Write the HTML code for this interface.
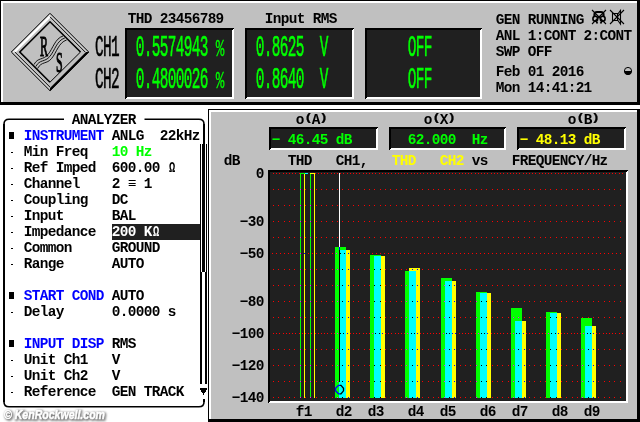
<!DOCTYPE html>
<html><head><meta charset="utf-8"><title>Analyzer</title>
<style>
html,body{margin:0;padding:0;background:#fff;}
svg{display:block;will-change:transform;}
.m{font-family:"Liberation Mono",monospace;}
.s{font-family:"Liberation Serif",serif;}
rect,path{shape-rendering:crispEdges;}
.aa path,.aa rect,.aa circle{shape-rendering:auto;}
</style></head><body>
<svg width="640" height="422" viewBox="0 0 640 422">
<rect x="0" y="0" width="640" height="422" fill="#fff"/>
<rect x="0" y="0" width="640" height="105" fill="#000"/>
<rect x="1" y="1" width="636" height="101" fill="#fff"/>
<rect x="3" y="3" width="634" height="99" fill="#c0c0c0"/>
<rect x="125" y="28" width="109" height="71" fill="#000"/>
<path d="M234 28V99H125l2 -2H232V30z" fill="#fff"/>
<rect x="127" y="30" width="105" height="67" fill="#202020"/>
<rect x="245" y="28" width="109" height="71" fill="#000"/>
<path d="M354 28V99H245l2 -2H352V30z" fill="#fff"/>
<rect x="247" y="30" width="105" height="67" fill="#202020"/>
<rect x="365" y="28" width="117" height="71" fill="#000"/>
<path d="M482 28V99H365l2 -2H480V30z" fill="#fff"/>
<rect x="367" y="30" width="113" height="67" fill="#202020"/>
<text class="m" transform="translate(95.08,56) scale(1,2.05)" font-size="14.4" font-weight="normal" fill="#000" xml:space="preserve" letter-spacing="-0.641" stroke="#000" stroke-width="0.5" style="vector-effect:non-scaling-stroke">CH1</text>
<text class="m" transform="translate(95.08,87.5) scale(1,2.05)" font-size="14.4" font-weight="normal" fill="#000" xml:space="preserve" letter-spacing="-0.641" stroke="#000" stroke-width="0.5" style="vector-effect:non-scaling-stroke">CH2</text>
<text class="m" transform="translate(127.68,23) scale(1,1)" font-size="14.4" font-weight="bold" fill="#000" xml:space="preserve" letter-spacing="-0.641">THD 23456789</text>
<text class="m" transform="translate(264.68,23) scale(1,1)" font-size="14.4" font-weight="bold" fill="#000" xml:space="preserve" letter-spacing="-0.641">Input RMS</text>
<text class="m" transform="translate(135.68,56) scale(1,2.05)" font-size="14.4" font-weight="normal" fill="#00ff00" xml:space="preserve" letter-spacing="-0.641" stroke="#00ff00" stroke-width="0.5" style="vector-effect:non-scaling-stroke">0.5574943</text>
<text class="m" transform="translate(215.68,56) scale(1,1.72)" font-size="14.4" font-weight="normal" fill="#00ff00" xml:space="preserve" letter-spacing="-0.641" stroke="#00ff00" stroke-width="0.15">%</text>
<text class="m" transform="translate(135.68,87.5) scale(1,2.05)" font-size="14.4" font-weight="normal" fill="#00ff00" xml:space="preserve" letter-spacing="-0.641" stroke="#00ff00" stroke-width="0.5" style="vector-effect:non-scaling-stroke">0.4800026</text>
<text class="m" transform="translate(215.68,87.5) scale(1,1.72)" font-size="14.4" font-weight="normal" fill="#00ff00" xml:space="preserve" letter-spacing="-0.641" stroke="#00ff00" stroke-width="0.15">%</text>
<text class="m" transform="translate(255.68,56) scale(1,2.05)" font-size="14.4" font-weight="normal" fill="#00ff00" xml:space="preserve" letter-spacing="-0.641" stroke="#00ff00" stroke-width="0.5" style="vector-effect:non-scaling-stroke">0.8625  V</text>
<text class="m" transform="translate(255.68,87.5) scale(1,2.05)" font-size="14.4" font-weight="normal" fill="#00ff00" xml:space="preserve" letter-spacing="-0.641" stroke="#00ff00" stroke-width="0.5" style="vector-effect:non-scaling-stroke">0.8640  V</text>
<text class="m" transform="translate(407.68,56) scale(1,2.05)" font-size="14.4" font-weight="normal" fill="#00ff00" xml:space="preserve" letter-spacing="-0.641" stroke="#00ff00" stroke-width="0.5" style="vector-effect:non-scaling-stroke">OFF</text>
<text class="m" transform="translate(407.68,87.5) scale(1,2.05)" font-size="14.4" font-weight="normal" fill="#00ff00" xml:space="preserve" letter-spacing="-0.641" stroke="#00ff00" stroke-width="0.5" style="vector-effect:non-scaling-stroke">OFF</text>
<text class="m" transform="translate(495.68,23.5) scale(1,1)" font-size="14.4" font-weight="bold" fill="#000" xml:space="preserve" letter-spacing="-0.641">GEN RUNNING</text>
<text class="m" transform="translate(495.68,39.5) scale(1,1)" font-size="14.4" font-weight="bold" fill="#000" xml:space="preserve" letter-spacing="-0.641">ANL 1:CONT 2:CONT</text>
<text class="m" transform="translate(495.68,55.5) scale(1,1)" font-size="14.4" font-weight="bold" fill="#000" xml:space="preserve" letter-spacing="-0.641">SWP OFF</text>
<text class="m" transform="translate(495.68,75.5) scale(1,1)" font-size="14.4" font-weight="bold" fill="#000" xml:space="preserve" letter-spacing="-0.641">Feb 01 2016</text>
<text class="m" transform="translate(495.68,91.5) scale(1,1)" font-size="14.4" font-weight="bold" fill="#000" xml:space="preserve" letter-spacing="-0.641">Mon 14:41:21</text>
<g class="aa" stroke="#000" fill="none"><path d="M594.500 16.500v-2q0-2.500 2.500-2.500h4q2.500 0 2.500 2.500v2" stroke-width="2.200"/><circle cx="595.300" cy="18.700" r="2.400" stroke-width="1.600"/><circle cx="602.700" cy="18.700" r="2.400" stroke-width="1.600"/><path d="M596 21l1.500 2.500M602 21l-1.500 2.500" stroke-width="1.600"/><rect x="598.300" y="16" width="1.600" height="1.600" fill="#000" stroke="none"/><path d="M592 10l14 14M606 10l-14 14" stroke-width="1.100"/><path d="M612.500 13.500h5v7h-5zM617.500 14.500l3-4v13.500l-3-4" stroke-width="1.100"/><path d="M610 10l14 14M624 10l-14 14" stroke-width="1.100"/></g>
<g class="aa"><circle cx="628" cy="71" r="3.600" fill="none" stroke="#000" stroke-width="1"/><path d="M624 71h8l-1 2.500l-2 1.500h-2l-2-1.500z" fill="#000"/></g>
<g class="aa" fill="none" stroke="#000"><path d="M50 14.500L12.500 52L16 52L50 18z" fill="#fff" stroke="none"/><path d="M50 14.500L87.500 52L85 52L50 17z" fill="#d4d4d4" stroke="none"/><path d="M12.500 52L50 89.500L50 87L15 52z" fill="#d4d4d4" stroke="none"/><path d="M50 91.200L89.200 52L86 52L50 88z" fill="#000" stroke="none"/><path d="M50 13.300L88.700 52L50 90.700L11.300 52z" stroke-width="1"/><path d="M50 16.800L85.200 52M14.800 52L50 87.200" stroke-width="1"/><path d="M80.500 52L50 21.800L19.800 52L50 82.200" stroke-width="1.600" stroke-linejoin="miter"/><path d="M50 82.200L80.500 52" stroke-width="1"/><path d="M34 64.500C38 57 43 60.500 48 54.500S55 38.500 63 36M35.800 66.500C39.800 59 44.800 62.500 49.800 56.500S56.800 40.500 64.800 38M37.600 68.500C41.600 61 46.600 64.500 51.600 58.500S58.600 42.500 66.600 40" stroke-width="0.900"/></g>
<text class="s" transform="translate(40.00,56) scale(1,2.5)" font-size="12" font-weight="normal" fill="#000" xml:space="preserve" stroke="#000" stroke-width="0.9" style="vector-effect:non-scaling-stroke">R</text>
<text class="s" transform="translate(56.00,72) scale(1,2.5)" font-size="12" font-weight="normal" fill="#000" xml:space="preserve" stroke="#000" stroke-width="0.9" style="vector-effect:non-scaling-stroke">S</text>
<rect x="3" y="124" width="2" height="278" fill="#000"/>
<rect x="203" y="124" width="2" height="20" fill="#000"/>
<rect x="203" y="399" width="2" height="3" fill="#000"/>
<g class="aa" fill="none" stroke="#000" stroke-width="1.600"><path d="M64 119.300H9q-5 0 -5 5M4 402q0 4.700 5 4.700H199q5 0 5 -4.700M144.500 119.300H199q5 0 5 5"/></g>
<text class="m" transform="translate(71.68,123.5) scale(1,1)" font-size="14.4" font-weight="bold" fill="#000" xml:space="preserve" letter-spacing="-0.641">ANALYZER</text>
<rect x="200" y="144" width="1" height="128" fill="#000"/>
<rect x="202" y="144" width="3" height="128" fill="#000"/>
<rect x="206" y="144" width="1" height="128" fill="#000"/>
<rect x="200" y="272" width="2" height="112" fill="#000"/>
<rect x="205" y="272" width="2" height="112" fill="#000"/>
<path d="M200 388h7v1.500l-3.500 5.500l-3.500 -5.500z" fill="#000"/>
<rect x="9" y="132.0" width="5" height="7" fill="#000"/>
<text class="m" transform="translate(23.68,139.5) scale(1,1)" font-size="14.4" font-weight="bold" fill="#0000ff" xml:space="preserve" letter-spacing="-0.641">INSTRUMENT</text>
<text class="m" transform="translate(111.68,139.5) scale(1,1)" font-size="14.4" font-weight="bold" fill="#000" xml:space="preserve" letter-spacing="-0.641">ANLG  22kHz</text>
<rect x="11" y="152.0" width="2" height="1" fill="#000"/>
<text class="m" transform="translate(23.68,155.5) scale(1,1)" font-size="14.4" font-weight="bold" fill="#000" xml:space="preserve" letter-spacing="-0.641">Min Freq</text>
<text class="m" transform="translate(111.68,155.5) scale(1,1)" font-size="14.4" font-weight="bold" fill="#00ff00" xml:space="preserve" letter-spacing="-0.641">10 Hz</text>
<rect x="11" y="168.0" width="2" height="1" fill="#000"/>
<text class="m" transform="translate(23.68,171.5) scale(1,1)" font-size="14.4" font-weight="bold" fill="#000" xml:space="preserve" letter-spacing="-0.641">Ref Imped</text>
<text class="m" transform="translate(111.68,171.5) scale(1,1)" font-size="14.4" font-weight="bold" fill="#000" xml:space="preserve" letter-spacing="-0.641">600.00  </text>
<text class="m" transform="translate(168.88,171.5) scale(0.72,1)" font-size="14.4" font-weight="bold" fill="#000" xml:space="preserve" letter-spacing="-0.641">Ω</text>
<rect x="11" y="184.0" width="2" height="1" fill="#000"/>
<text class="m" transform="translate(23.68,187.5) scale(1,1)" font-size="14.4" font-weight="bold" fill="#000" xml:space="preserve" letter-spacing="-0.641">Channel</text>
<text class="m" transform="translate(111.68,187.5) scale(1,1)" font-size="14.4" font-weight="bold" fill="#000" xml:space="preserve" letter-spacing="-0.641">2 ≡ 1</text>
<rect x="11" y="200.0" width="2" height="1" fill="#000"/>
<text class="m" transform="translate(23.68,203.5) scale(1,1)" font-size="14.4" font-weight="bold" fill="#000" xml:space="preserve" letter-spacing="-0.641">Coupling</text>
<text class="m" transform="translate(111.68,203.5) scale(1,1)" font-size="14.4" font-weight="bold" fill="#000" xml:space="preserve" letter-spacing="-0.641">DC</text>
<rect x="11" y="216.0" width="2" height="1" fill="#000"/>
<text class="m" transform="translate(23.68,219.5) scale(1,1)" font-size="14.4" font-weight="bold" fill="#000" xml:space="preserve" letter-spacing="-0.641">Input</text>
<text class="m" transform="translate(111.68,219.5) scale(1,1)" font-size="14.4" font-weight="bold" fill="#000" xml:space="preserve" letter-spacing="-0.641">BAL</text>
<rect x="11" y="232.0" width="2" height="1" fill="#000"/>
<text class="m" transform="translate(23.68,235.5) scale(1,1)" font-size="14.4" font-weight="bold" fill="#000" xml:space="preserve" letter-spacing="-0.641">Impedance</text>
<rect x="112" y="224.0" width="88" height="16" fill="#202020"/>
<text class="m" transform="translate(111.68,235.5) scale(1,1)" font-size="14.4" font-weight="bold" fill="#fff" xml:space="preserve" letter-spacing="-0.641">200 K </text>
<text class="m" transform="translate(152.88,235.5) scale(0.72,1)" font-size="14.4" font-weight="bold" fill="#fff" xml:space="preserve" letter-spacing="-0.641">Ω</text>
<rect x="11" y="248.0" width="2" height="1" fill="#000"/>
<text class="m" transform="translate(23.68,251.5) scale(1,1)" font-size="14.4" font-weight="bold" fill="#000" xml:space="preserve" letter-spacing="-0.641">Common</text>
<text class="m" transform="translate(111.68,251.5) scale(1,1)" font-size="14.4" font-weight="bold" fill="#000" xml:space="preserve" letter-spacing="-0.641">GROUND</text>
<rect x="11" y="264.0" width="2" height="1" fill="#000"/>
<text class="m" transform="translate(23.68,267.5) scale(1,1)" font-size="14.4" font-weight="bold" fill="#000" xml:space="preserve" letter-spacing="-0.641">Range</text>
<text class="m" transform="translate(111.68,267.5) scale(1,1)" font-size="14.4" font-weight="bold" fill="#000" xml:space="preserve" letter-spacing="-0.641">AUTO</text>
<rect x="9" y="292.0" width="5" height="7" fill="#000"/>
<text class="m" transform="translate(23.68,299.5) scale(1,1)" font-size="14.4" font-weight="bold" fill="#0000ff" xml:space="preserve" letter-spacing="-0.641">START COND</text>
<text class="m" transform="translate(111.68,299.5) scale(1,1)" font-size="14.4" font-weight="bold" fill="#000" xml:space="preserve" letter-spacing="-0.641">AUTO</text>
<rect x="11" y="312.0" width="2" height="1" fill="#000"/>
<text class="m" transform="translate(23.68,315.5) scale(1,1)" font-size="14.4" font-weight="bold" fill="#000" xml:space="preserve" letter-spacing="-0.641">Delay</text>
<text class="m" transform="translate(111.68,315.5) scale(1,1)" font-size="14.4" font-weight="bold" fill="#000" xml:space="preserve" letter-spacing="-0.641">0.0000 s</text>
<rect x="9" y="340.0" width="5" height="7" fill="#000"/>
<text class="m" transform="translate(23.68,347.5) scale(1,1)" font-size="14.4" font-weight="bold" fill="#0000ff" xml:space="preserve" letter-spacing="-0.641">INPUT DISP</text>
<text class="m" transform="translate(111.68,347.5) scale(1,1)" font-size="14.4" font-weight="bold" fill="#000" xml:space="preserve" letter-spacing="-0.641">RMS</text>
<rect x="11" y="360.0" width="2" height="1" fill="#000"/>
<text class="m" transform="translate(23.68,363.5) scale(1,1)" font-size="14.4" font-weight="bold" fill="#000" xml:space="preserve" letter-spacing="-0.641">Unit Ch1</text>
<text class="m" transform="translate(111.68,363.5) scale(1,1)" font-size="14.4" font-weight="bold" fill="#000" xml:space="preserve" letter-spacing="-0.641">V</text>
<rect x="11" y="376.0" width="2" height="1" fill="#000"/>
<text class="m" transform="translate(23.68,379.5) scale(1,1)" font-size="14.4" font-weight="bold" fill="#000" xml:space="preserve" letter-spacing="-0.641">Unit Ch2</text>
<text class="m" transform="translate(111.68,379.5) scale(1,1)" font-size="14.4" font-weight="bold" fill="#000" xml:space="preserve" letter-spacing="-0.641">V</text>
<rect x="11" y="392.0" width="2" height="1" fill="#000"/>
<text class="m" transform="translate(23.68,395.5) scale(1,1)" font-size="14.4" font-weight="bold" fill="#000" xml:space="preserve" letter-spacing="-0.641">Reference</text>
<text class="m" transform="translate(111.68,395.5) scale(1,1)" font-size="14.4" font-weight="bold" fill="#000" xml:space="preserve" letter-spacing="-0.641">GEN TRACK</text>
<defs><filter id="bl" x="-10%" y="-50%" width="120%" height="200%"><feGaussianBlur stdDeviation="1.1"/></filter></defs>
<text x="5" y="420" font-family="Liberation Sans, sans-serif" font-style="italic" font-weight="bold" font-size="13" textLength="101" lengthAdjust="spacingAndGlyphs" fill="#808080" stroke="#808080" stroke-width="2" filter="url(#bl)">© KenRockwell.com</text>
<text x="4" y="419" font-family="Liberation Sans, sans-serif" font-style="italic" font-weight="bold" font-size="13" textLength="101" lengthAdjust="spacingAndGlyphs" fill="#fff" stroke="#fff" stroke-width="0.500">© KenRockwell.com</text>
<rect x="208" y="109" width="432" height="313" fill="#000"/>
<rect x="209" y="110" width="428" height="309" fill="#fff"/>
<rect x="211" y="112" width="426" height="307" fill="#c0c0c0"/>
<rect x="269" y="127" width="109" height="23" fill="#000"/>
<path d="M378 127V150H269l2 -2H376V129z" fill="#fff"/>
<rect x="271" y="129" width="105" height="19" fill="#202020"/>
<rect x="389" y="127" width="117" height="23" fill="#000"/>
<path d="M506 127V150H389l2 -2H504V129z" fill="#fff"/>
<rect x="391" y="129" width="113" height="19" fill="#202020"/>
<rect x="517" y="127" width="109" height="23" fill="#000"/>
<path d="M626 127V150H517l2 -2H624V129z" fill="#fff"/>
<rect x="519" y="129" width="105" height="19" fill="#202020"/>
<text class="m" transform="translate(295.68,123.5) scale(1,1)" font-size="14.4" font-weight="bold" fill="#000" xml:space="preserve" letter-spacing="-0.641">o A</text>
<text class="m" transform="translate(304.18,121.3) scale(1,0.76)" font-size="14.4" font-weight="bold" fill="#000" xml:space="preserve" letter-spacing="-0.641" stroke="#000" stroke-width="0.3">(</text>
<text class="m" transform="translate(319.18,121.3) scale(1,0.76)" font-size="14.4" font-weight="bold" fill="#000" xml:space="preserve" letter-spacing="-0.641" stroke="#000" stroke-width="0.3">)</text>
<text class="m" transform="translate(423.68,123.5) scale(1,1)" font-size="14.4" font-weight="bold" fill="#000" xml:space="preserve" letter-spacing="-0.641">o X</text>
<text class="m" transform="translate(432.18,121.3) scale(1,0.76)" font-size="14.4" font-weight="bold" fill="#000" xml:space="preserve" letter-spacing="-0.641" stroke="#000" stroke-width="0.3">(</text>
<text class="m" transform="translate(447.18,121.3) scale(1,0.76)" font-size="14.4" font-weight="bold" fill="#000" xml:space="preserve" letter-spacing="-0.641" stroke="#000" stroke-width="0.3">)</text>
<text class="m" transform="translate(567.68,123.5) scale(1,1)" font-size="14.4" font-weight="bold" fill="#000" xml:space="preserve" letter-spacing="-0.641">o B</text>
<text class="m" transform="translate(576.18,121.3) scale(1,0.76)" font-size="14.4" font-weight="bold" fill="#000" xml:space="preserve" letter-spacing="-0.641" stroke="#000" stroke-width="0.3">(</text>
<text class="m" transform="translate(591.18,121.3) scale(1,0.76)" font-size="14.4" font-weight="bold" fill="#000" xml:space="preserve" letter-spacing="-0.641" stroke="#000" stroke-width="0.3">)</text>
<text class="m" transform="translate(271.68,143.5) scale(1,1)" font-size="14.4" font-weight="bold" fill="#00ff00" xml:space="preserve" letter-spacing="-0.641">− 46.45 dB</text>
<text class="m" transform="translate(407.68,143.5) scale(1,1)" font-size="14.4" font-weight="bold" fill="#00ff00" xml:space="preserve" letter-spacing="-0.641">62.000  Hz</text>
<text class="m" transform="translate(519.68,143.5) scale(1,1)" font-size="14.4" font-weight="bold" fill="#ffff00" xml:space="preserve" letter-spacing="-0.641">− 48.13 dB</text>
<text class="m" transform="translate(223.68,164.5) scale(1,1)" font-size="14.4" font-weight="bold" fill="#000" xml:space="preserve" letter-spacing="-0.641">dB</text>
<text class="m" transform="translate(287.68,164.5) scale(1,1)" font-size="14.4" font-weight="bold" fill="#000" xml:space="preserve" letter-spacing="-0.641">THD</text>
<text class="m" transform="translate(335.68,164.5) scale(1,1)" font-size="14.4" font-weight="bold" fill="#000" xml:space="preserve" letter-spacing="-0.641">CH1,</text>
<text class="m" transform="translate(391.68,164.5) scale(1,1)" font-size="14.4" font-weight="bold" fill="#ffff00" xml:space="preserve" letter-spacing="-0.641">THD</text>
<text class="m" transform="translate(439.68,164.5) scale(1,1)" font-size="14.4" font-weight="bold" fill="#ffff00" xml:space="preserve" letter-spacing="-0.641">CH2</text>
<text class="m" transform="translate(471.68,164.5) scale(1,1)" font-size="14.4" font-weight="bold" fill="#000" xml:space="preserve" letter-spacing="-0.641">vs</text>
<text class="m" transform="translate(511.68,164.5) scale(1,1)" font-size="14.4" font-weight="bold" fill="#000" xml:space="preserve" letter-spacing="-0.641">FREQUENCY/Hz</text>
<rect x="268" y="170" width="360" height="233" fill="#000"/>
<path d="M628 170V403H268l2 -2H626V172z" fill="#fff"/>
<rect x="270" y="172" width="356" height="229" fill="#202020"/>
<text class="m" transform="translate(255.68,177.5) scale(1,1)" font-size="14.4" font-weight="bold" fill="#000" xml:space="preserve" letter-spacing="-0.641">0</text>
<text class="m" transform="translate(239.68,225.5) scale(1,1)" font-size="14.4" font-weight="bold" fill="#000" xml:space="preserve" letter-spacing="-0.641">−30</text>
<text class="m" transform="translate(239.68,257.5) scale(1,1)" font-size="14.4" font-weight="bold" fill="#000" xml:space="preserve" letter-spacing="-0.641">−50</text>
<text class="m" transform="translate(239.68,305.5) scale(1,1)" font-size="14.4" font-weight="bold" fill="#000" xml:space="preserve" letter-spacing="-0.641">−80</text>
<text class="m" transform="translate(231.68,337.5) scale(1,1)" font-size="14.4" font-weight="bold" fill="#000" xml:space="preserve" letter-spacing="-0.641">−100</text>
<text class="m" transform="translate(231.68,369.5) scale(1,1)" font-size="14.4" font-weight="bold" fill="#000" xml:space="preserve" letter-spacing="-0.641">−120</text>
<text class="m" transform="translate(231.68,401.5) scale(1,1)" font-size="14.4" font-weight="bold" fill="#000" xml:space="preserve" letter-spacing="-0.641">−140</text>
<rect x="300" y="173" width="1" height="225" fill="#00ff00"/>
<rect x="310" y="173" width="1" height="225" fill="#00ff00"/>
<rect x="304" y="173" width="1" height="225" fill="#ffff00"/>
<rect x="314" y="173" width="1" height="225" fill="#ffff00"/>
<rect x="300" y="173" width="5" height="1" fill="#00ff00"/>
<rect x="305" y="173" width="3" height="1" fill="#00ffff"/>
<rect x="310" y="173" width="4" height="1" fill="#ffff00"/>
<rect x="335" y="247" width="11" height="151" fill="#00ff00"/>
<rect x="339" y="250" width="11" height="148" fill="#ffff00"/>
<rect x="339" y="250" width="7" height="148" fill="#00ffff"/>
<rect x="370" y="255" width="11" height="143" fill="#00ff00"/>
<rect x="374" y="256" width="11" height="142" fill="#ffff00"/>
<rect x="374" y="256" width="7" height="142" fill="#00ffff"/>
<rect x="405" y="271" width="11" height="127" fill="#00ff00"/>
<rect x="409" y="268" width="11" height="130" fill="#ffff00"/>
<rect x="409" y="271" width="7" height="127" fill="#00ffff"/>
<rect x="441" y="278" width="11" height="120" fill="#00ff00"/>
<rect x="445" y="281" width="11" height="117" fill="#ffff00"/>
<rect x="445" y="281" width="7" height="117" fill="#00ffff"/>
<rect x="476" y="292" width="11" height="106" fill="#00ff00"/>
<rect x="480" y="293" width="11" height="105" fill="#ffff00"/>
<rect x="480" y="293" width="7" height="105" fill="#00ffff"/>
<rect x="511" y="308" width="11" height="90" fill="#00ff00"/>
<rect x="515" y="321" width="11" height="77" fill="#ffff00"/>
<rect x="515" y="321" width="7" height="77" fill="#00ffff"/>
<rect x="546" y="312" width="11" height="86" fill="#00ff00"/>
<rect x="550" y="313" width="11" height="85" fill="#ffff00"/>
<rect x="550" y="313" width="7" height="85" fill="#00ffff"/>
<rect x="581" y="318" width="11" height="80" fill="#00ff00"/>
<rect x="585" y="326" width="11" height="72" fill="#ffff00"/>
<rect x="585" y="326" width="7" height="72" fill="#00ffff"/>
<path d="M273 173.5h1M276 173.5h1M279 173.5h1M283 173.5h1M286 173.5h1M289 173.5h1M292 173.5h1M295 173.5h1M299 173.5h1M315 173.5h1M318 173.5h1M321 173.5h1M324 173.5h1M327 173.5h1M331 173.5h1M334 173.5h1M337 173.5h1M340 173.5h1M343 173.5h1M347 173.5h1M350 173.5h1M353 173.5h1M356 173.5h1M359 173.5h1M363 173.5h1M366 173.5h1M369 173.5h1M372 173.5h1M375 173.5h1M379 173.5h1M382 173.5h1M385 173.5h1M388 173.5h1M391 173.5h1M395 173.5h1M398 173.5h1M401 173.5h1M404 173.5h1M407 173.5h1M411 173.5h1M414 173.5h1M417 173.5h1M420 173.5h1M423 173.5h1M427 173.5h1M430 173.5h1M433 173.5h1M436 173.5h1M439 173.5h1M443 173.5h1M446 173.5h1M449 173.5h1M452 173.5h1M455 173.5h1M459 173.5h1M462 173.5h1M465 173.5h1M468 173.5h1M471 173.5h1M475 173.5h1M478 173.5h1M481 173.5h1M484 173.5h1M487 173.5h1M491 173.5h1M494 173.5h1M497 173.5h1M500 173.5h1M503 173.5h1M507 173.5h1M510 173.5h1M513 173.5h1M516 173.5h1M519 173.5h1M523 173.5h1M526 173.5h1M529 173.5h1M532 173.5h1M535 173.5h1M539 173.5h1M542 173.5h1M545 173.5h1M548 173.5h1M551 173.5h1M555 173.5h1M558 173.5h1M561 173.5h1M564 173.5h1M567 173.5h1M571 173.5h1M574 173.5h1M577 173.5h1M580 173.5h1M583 173.5h1M587 173.5h1M590 173.5h1M593 173.5h1M596 173.5h1M599 173.5h1M603 173.5h1M606 173.5h1M609 173.5h1M612 173.5h1M615 173.5h1M619 173.5h1M622 173.5h1M273 189.5h1M278 189.5h1M284 189.5h1M289 189.5h1M294 189.5h1M305 189.5h1M316 189.5h1M321 189.5h1M326 189.5h1M332 189.5h1M337 189.5h1M342 189.5h1M348 189.5h1M353 189.5h1M358 189.5h1M364 189.5h1M369 189.5h1M374 189.5h1M380 189.5h1M385 189.5h1M390 189.5h1M396 189.5h1M401 189.5h1M406 189.5h1M412 189.5h1M417 189.5h1M422 189.5h1M428 189.5h1M433 189.5h1M438 189.5h1M444 189.5h1M449 189.5h1M454 189.5h1M460 189.5h1M465 189.5h1M470 189.5h1M476 189.5h1M481 189.5h1M486 189.5h1M492 189.5h1M497 189.5h1M502 189.5h1M508 189.5h1M513 189.5h1M518 189.5h1M524 189.5h1M529 189.5h1M534 189.5h1M540 189.5h1M545 189.5h1M550 189.5h1M556 189.5h1M561 189.5h1M566 189.5h1M572 189.5h1M577 189.5h1M582 189.5h1M588 189.5h1M593 189.5h1M598 189.5h1M604 189.5h1M609 189.5h1M614 189.5h1M620 189.5h1M273 205.5h1M278 205.5h1M284 205.5h1M289 205.5h1M294 205.5h1M305 205.5h1M316 205.5h1M321 205.5h1M326 205.5h1M332 205.5h1M337 205.5h1M342 205.5h1M348 205.5h1M353 205.5h1M358 205.5h1M364 205.5h1M369 205.5h1M374 205.5h1M380 205.5h1M385 205.5h1M390 205.5h1M396 205.5h1M401 205.5h1M406 205.5h1M412 205.5h1M417 205.5h1M422 205.5h1M428 205.5h1M433 205.5h1M438 205.5h1M444 205.5h1M449 205.5h1M454 205.5h1M460 205.5h1M465 205.5h1M470 205.5h1M476 205.5h1M481 205.5h1M486 205.5h1M492 205.5h1M497 205.5h1M502 205.5h1M508 205.5h1M513 205.5h1M518 205.5h1M524 205.5h1M529 205.5h1M534 205.5h1M540 205.5h1M545 205.5h1M550 205.5h1M556 205.5h1M561 205.5h1M566 205.5h1M572 205.5h1M577 205.5h1M582 205.5h1M588 205.5h1M593 205.5h1M598 205.5h1M604 205.5h1M609 205.5h1M614 205.5h1M620 205.5h1M273 221.5h1M278 221.5h1M284 221.5h1M289 221.5h1M294 221.5h1M305 221.5h1M316 221.5h1M321 221.5h1M326 221.5h1M332 221.5h1M337 221.5h1M342 221.5h1M348 221.5h1M353 221.5h1M358 221.5h1M364 221.5h1M369 221.5h1M374 221.5h1M380 221.5h1M385 221.5h1M390 221.5h1M396 221.5h1M401 221.5h1M406 221.5h1M412 221.5h1M417 221.5h1M422 221.5h1M428 221.5h1M433 221.5h1M438 221.5h1M444 221.5h1M449 221.5h1M454 221.5h1M460 221.5h1M465 221.5h1M470 221.5h1M476 221.5h1M481 221.5h1M486 221.5h1M492 221.5h1M497 221.5h1M502 221.5h1M508 221.5h1M513 221.5h1M518 221.5h1M524 221.5h1M529 221.5h1M534 221.5h1M540 221.5h1M545 221.5h1M550 221.5h1M556 221.5h1M561 221.5h1M566 221.5h1M572 221.5h1M577 221.5h1M582 221.5h1M588 221.5h1M593 221.5h1M598 221.5h1M604 221.5h1M609 221.5h1M614 221.5h1M620 221.5h1M273 237.5h1M278 237.5h1M284 237.5h1M289 237.5h1M294 237.5h1M305 237.5h1M316 237.5h1M321 237.5h1M326 237.5h1M332 237.5h1M337 237.5h1M342 237.5h1M348 237.5h1M353 237.5h1M358 237.5h1M364 237.5h1M369 237.5h1M374 237.5h1M380 237.5h1M385 237.5h1M390 237.5h1M396 237.5h1M401 237.5h1M406 237.5h1M412 237.5h1M417 237.5h1M422 237.5h1M428 237.5h1M433 237.5h1M438 237.5h1M444 237.5h1M449 237.5h1M454 237.5h1M460 237.5h1M465 237.5h1M470 237.5h1M476 237.5h1M481 237.5h1M486 237.5h1M492 237.5h1M497 237.5h1M502 237.5h1M508 237.5h1M513 237.5h1M518 237.5h1M524 237.5h1M529 237.5h1M534 237.5h1M540 237.5h1M545 237.5h1M550 237.5h1M556 237.5h1M561 237.5h1M566 237.5h1M572 237.5h1M577 237.5h1M582 237.5h1M588 237.5h1M593 237.5h1M598 237.5h1M604 237.5h1M609 237.5h1M614 237.5h1M620 237.5h1M272 253.5h1M276 253.5h1M280 253.5h1M284 253.5h1M288 253.5h1M292 253.5h1M296 253.5h1M308 253.5h1M312 253.5h1M316 253.5h1M320 253.5h1M324 253.5h1M328 253.5h1M332 253.5h1M352 253.5h1M356 253.5h1M360 253.5h1M364 253.5h1M368 253.5h1M372 253.5h1M376 253.5h1M380 253.5h1M384 253.5h1M388 253.5h1M392 253.5h1M396 253.5h1M400 253.5h1M404 253.5h1M408 253.5h1M412 253.5h1M416 253.5h1M420 253.5h1M424 253.5h1M428 253.5h1M432 253.5h1M436 253.5h1M440 253.5h1M444 253.5h1M448 253.5h1M452 253.5h1M456 253.5h1M460 253.5h1M464 253.5h1M468 253.5h1M472 253.5h1M476 253.5h1M480 253.5h1M484 253.5h1M488 253.5h1M492 253.5h1M496 253.5h1M500 253.5h1M504 253.5h1M508 253.5h1M512 253.5h1M516 253.5h1M520 253.5h1M524 253.5h1M528 253.5h1M532 253.5h1M536 253.5h1M540 253.5h1M544 253.5h1M548 253.5h1M552 253.5h1M556 253.5h1M560 253.5h1M564 253.5h1M568 253.5h1M572 253.5h1M576 253.5h1M580 253.5h1M584 253.5h1M588 253.5h1M592 253.5h1M596 253.5h1M600 253.5h1M604 253.5h1M608 253.5h1M612 253.5h1M616 253.5h1M620 253.5h1M273 269.5h1M278 269.5h1M284 269.5h1M289 269.5h1M294 269.5h1M305 269.5h1M316 269.5h1M321 269.5h1M326 269.5h1M332 269.5h1M353 269.5h1M358 269.5h1M364 269.5h1M369 269.5h1M385 269.5h1M390 269.5h1M396 269.5h1M401 269.5h1M406 269.5h1M422 269.5h1M428 269.5h1M433 269.5h1M438 269.5h1M444 269.5h1M449 269.5h1M454 269.5h1M460 269.5h1M465 269.5h1M470 269.5h1M476 269.5h1M481 269.5h1M486 269.5h1M492 269.5h1M497 269.5h1M502 269.5h1M508 269.5h1M513 269.5h1M518 269.5h1M524 269.5h1M529 269.5h1M534 269.5h1M540 269.5h1M545 269.5h1M550 269.5h1M556 269.5h1M561 269.5h1M566 269.5h1M572 269.5h1M577 269.5h1M582 269.5h1M588 269.5h1M593 269.5h1M598 269.5h1M604 269.5h1M609 269.5h1M614 269.5h1M620 269.5h1M273 285.5h1M278 285.5h1M284 285.5h1M289 285.5h1M294 285.5h1M305 285.5h1M316 285.5h1M321 285.5h1M326 285.5h1M332 285.5h1M353 285.5h1M358 285.5h1M364 285.5h1M369 285.5h1M385 285.5h1M390 285.5h1M396 285.5h1M401 285.5h1M422 285.5h1M428 285.5h1M433 285.5h1M438 285.5h1M460 285.5h1M465 285.5h1M470 285.5h1M476 285.5h1M481 285.5h1M486 285.5h1M492 285.5h1M497 285.5h1M502 285.5h1M508 285.5h1M513 285.5h1M518 285.5h1M524 285.5h1M529 285.5h1M534 285.5h1M540 285.5h1M545 285.5h1M550 285.5h1M556 285.5h1M561 285.5h1M566 285.5h1M572 285.5h1M577 285.5h1M582 285.5h1M588 285.5h1M593 285.5h1M598 285.5h1M604 285.5h1M609 285.5h1M614 285.5h1M620 285.5h1M273 301.5h1M278 301.5h1M284 301.5h1M289 301.5h1M294 301.5h1M305 301.5h1M316 301.5h1M321 301.5h1M326 301.5h1M332 301.5h1M353 301.5h1M358 301.5h1M364 301.5h1M369 301.5h1M385 301.5h1M390 301.5h1M396 301.5h1M401 301.5h1M422 301.5h1M428 301.5h1M433 301.5h1M438 301.5h1M460 301.5h1M465 301.5h1M470 301.5h1M492 301.5h1M497 301.5h1M502 301.5h1M508 301.5h1M513 301.5h1M518 301.5h1M524 301.5h1M529 301.5h1M534 301.5h1M540 301.5h1M545 301.5h1M550 301.5h1M556 301.5h1M561 301.5h1M566 301.5h1M572 301.5h1M577 301.5h1M582 301.5h1M588 301.5h1M593 301.5h1M598 301.5h1M604 301.5h1M609 301.5h1M614 301.5h1M620 301.5h1M273 317.5h1M278 317.5h1M284 317.5h1M289 317.5h1M294 317.5h1M305 317.5h1M316 317.5h1M321 317.5h1M326 317.5h1M332 317.5h1M353 317.5h1M358 317.5h1M364 317.5h1M369 317.5h1M385 317.5h1M390 317.5h1M396 317.5h1M401 317.5h1M422 317.5h1M428 317.5h1M433 317.5h1M438 317.5h1M460 317.5h1M465 317.5h1M470 317.5h1M492 317.5h1M497 317.5h1M502 317.5h1M508 317.5h1M524 317.5h1M529 317.5h1M534 317.5h1M540 317.5h1M545 317.5h1M561 317.5h1M566 317.5h1M572 317.5h1M577 317.5h1M582 317.5h1M588 317.5h1M593 317.5h1M598 317.5h1M604 317.5h1M609 317.5h1M614 317.5h1M620 317.5h1M273 333.5h1M276 333.5h1M279 333.5h1M283 333.5h1M286 333.5h1M289 333.5h1M292 333.5h1M295 333.5h1M299 333.5h1M302 333.5h1M305 333.5h1M308 333.5h1M311 333.5h1M315 333.5h1M318 333.5h1M321 333.5h1M324 333.5h1M327 333.5h1M331 333.5h1M334 333.5h1M350 333.5h1M353 333.5h1M356 333.5h1M359 333.5h1M363 333.5h1M366 333.5h1M369 333.5h1M385 333.5h1M388 333.5h1M391 333.5h1M395 333.5h1M398 333.5h1M401 333.5h1M404 333.5h1M420 333.5h1M423 333.5h1M427 333.5h1M430 333.5h1M433 333.5h1M436 333.5h1M439 333.5h1M459 333.5h1M462 333.5h1M465 333.5h1M468 333.5h1M471 333.5h1M475 333.5h1M491 333.5h1M494 333.5h1M497 333.5h1M500 333.5h1M503 333.5h1M507 333.5h1M510 333.5h1M526 333.5h1M529 333.5h1M532 333.5h1M535 333.5h1M539 333.5h1M542 333.5h1M545 333.5h1M561 333.5h1M564 333.5h1M567 333.5h1M571 333.5h1M574 333.5h1M577 333.5h1M580 333.5h1M596 333.5h1M599 333.5h1M603 333.5h1M606 333.5h1M609 333.5h1M612 333.5h1M615 333.5h1M619 333.5h1M622 333.5h1M273 349.5h1M278 349.5h1M284 349.5h1M289 349.5h1M294 349.5h1M305 349.5h1M316 349.5h1M321 349.5h1M326 349.5h1M332 349.5h1M353 349.5h1M358 349.5h1M364 349.5h1M369 349.5h1M385 349.5h1M390 349.5h1M396 349.5h1M401 349.5h1M422 349.5h1M428 349.5h1M433 349.5h1M438 349.5h1M460 349.5h1M465 349.5h1M470 349.5h1M492 349.5h1M497 349.5h1M502 349.5h1M508 349.5h1M529 349.5h1M534 349.5h1M540 349.5h1M545 349.5h1M561 349.5h1M566 349.5h1M572 349.5h1M577 349.5h1M598 349.5h1M604 349.5h1M609 349.5h1M614 349.5h1M620 349.5h1M273 365.5h1M278 365.5h1M284 365.5h1M289 365.5h1M294 365.5h1M305 365.5h1M316 365.5h1M321 365.5h1M326 365.5h1M332 365.5h1M353 365.5h1M358 365.5h1M364 365.5h1M369 365.5h1M385 365.5h1M390 365.5h1M396 365.5h1M401 365.5h1M422 365.5h1M428 365.5h1M433 365.5h1M438 365.5h1M460 365.5h1M465 365.5h1M470 365.5h1M492 365.5h1M497 365.5h1M502 365.5h1M508 365.5h1M529 365.5h1M534 365.5h1M540 365.5h1M545 365.5h1M561 365.5h1M566 365.5h1M572 365.5h1M577 365.5h1M598 365.5h1M604 365.5h1M609 365.5h1M614 365.5h1M620 365.5h1M273 381.5h1M278 381.5h1M284 381.5h1M289 381.5h1M294 381.5h1M305 381.5h1M316 381.5h1M321 381.5h1M326 381.5h1M332 381.5h1M353 381.5h1M358 381.5h1M364 381.5h1M369 381.5h1M385 381.5h1M390 381.5h1M396 381.5h1M401 381.5h1M422 381.5h1M428 381.5h1M433 381.5h1M438 381.5h1M460 381.5h1M465 381.5h1M470 381.5h1M492 381.5h1M497 381.5h1M502 381.5h1M508 381.5h1M529 381.5h1M534 381.5h1M540 381.5h1M545 381.5h1M561 381.5h1M566 381.5h1M572 381.5h1M577 381.5h1M598 381.5h1M604 381.5h1M609 381.5h1M614 381.5h1M620 381.5h1M273 397.5h1M278 397.5h1M284 397.5h1M289 397.5h1M294 397.5h1M305 397.5h1M316 397.5h1M321 397.5h1M326 397.5h1M332 397.5h1M353 397.5h1M358 397.5h1M364 397.5h1M369 397.5h1M385 397.5h1M390 397.5h1M396 397.5h1M401 397.5h1M422 397.5h1M428 397.5h1M433 397.5h1M438 397.5h1M460 397.5h1M465 397.5h1M470 397.5h1M492 397.5h1M497 397.5h1M502 397.5h1M508 397.5h1M529 397.5h1M534 397.5h1M540 397.5h1M545 397.5h1M561 397.5h1M566 397.5h1M572 397.5h1M577 397.5h1M598 397.5h1M604 397.5h1M609 397.5h1M614 397.5h1M620 397.5h1" stroke="#ff0000" stroke-width="1" fill="none"/>
<path d="M300 189.5h1M310 189.5h1M300 205.5h1M310 205.5h1M300 221.5h1M310 221.5h1M300 237.5h1M310 237.5h1M300 253.5h1M336 253.5h1M300 269.5h1M310 269.5h1M337 269.5h1M300 285.5h1M310 285.5h1M337 285.5h1M406 285.5h1M444 285.5h1M300 301.5h1M310 301.5h1M337 301.5h1M406 301.5h1M444 301.5h1M476 301.5h1M300 317.5h1M310 317.5h1M337 317.5h1M406 317.5h1M444 317.5h1M476 317.5h1M513 317.5h1M518 317.5h1M337 333.5h1M372 333.5h1M407 333.5h1M443 333.5h1M478 333.5h1M513 333.5h1M548 333.5h1M583 333.5h1M300 349.5h1M310 349.5h1M337 349.5h1M406 349.5h1M444 349.5h1M476 349.5h1M513 349.5h1M582 349.5h1M300 365.5h1M310 365.5h1M337 365.5h1M406 365.5h1M444 365.5h1M476 365.5h1M513 365.5h1M582 365.5h1M300 381.5h1M310 381.5h1M337 381.5h1M406 381.5h1M444 381.5h1M476 381.5h1M513 381.5h1M582 381.5h1M300 397.5h1M310 397.5h1M337 397.5h1M406 397.5h1M444 397.5h1M476 397.5h1M513 397.5h1M582 397.5h1" stroke="#ff00ff" stroke-width="1" fill="none"/>
<path d="M304 253.5h1M348 253.5h1M348 269.5h1M412 269.5h1M417 269.5h1M348 285.5h1M417 285.5h1M454 285.5h1M348 301.5h1M417 301.5h1M454 301.5h1M348 317.5h1M417 317.5h1M454 317.5h1M347 333.5h1M382 333.5h1M417 333.5h1M452 333.5h1M455 333.5h1M487 333.5h1M523 333.5h1M558 333.5h1M593 333.5h1M348 349.5h1M417 349.5h1M454 349.5h1M524 349.5h1M593 349.5h1M348 365.5h1M417 365.5h1M454 365.5h1M524 365.5h1M593 365.5h1M348 381.5h1M417 381.5h1M454 381.5h1M524 381.5h1M593 381.5h1M348 397.5h1M417 397.5h1M454 397.5h1M524 397.5h1M593 397.5h1" stroke="#0000ff" stroke-width="1" fill="none"/>
<path d="M340 253.5h1M344 253.5h1M342 269.5h1M374 269.5h1M380 269.5h1M342 285.5h1M374 285.5h1M380 285.5h1M412 285.5h1M449 285.5h1M342 301.5h1M374 301.5h1M380 301.5h1M412 301.5h1M449 301.5h1M481 301.5h1M486 301.5h1M342 317.5h1M374 317.5h1M380 317.5h1M412 317.5h1M449 317.5h1M481 317.5h1M486 317.5h1M550 317.5h1M556 317.5h1M340 333.5h1M343 333.5h1M375 333.5h1M379 333.5h1M411 333.5h1M414 333.5h1M446 333.5h1M449 333.5h1M481 333.5h1M484 333.5h1M516 333.5h1M519 333.5h1M551 333.5h1M555 333.5h1M587 333.5h1M590 333.5h1M342 349.5h1M374 349.5h1M380 349.5h1M412 349.5h1M449 349.5h1M481 349.5h1M486 349.5h1M518 349.5h1M550 349.5h1M556 349.5h1M588 349.5h1M342 365.5h1M374 365.5h1M380 365.5h1M412 365.5h1M449 365.5h1M481 365.5h1M486 365.5h1M518 365.5h1M550 365.5h1M556 365.5h1M588 365.5h1M342 381.5h1M374 381.5h1M380 381.5h1M412 381.5h1M449 381.5h1M481 381.5h1M486 381.5h1M518 381.5h1M550 381.5h1M556 381.5h1M588 381.5h1M342 397.5h1M374 397.5h1M380 397.5h1M412 397.5h1M449 397.5h1M481 397.5h1M486 397.5h1M518 397.5h1M550 397.5h1M556 397.5h1M588 397.5h1" stroke="#000" stroke-width="1" fill="none"/>
<rect x="339" y="173" width="1" height="74" fill="#fff"/>
<rect x="339" y="247" width="1" height="3" fill="#0000ff"/>
<rect x="339" y="250" width="1" height="132" fill="#000"/>
<g class="aa" fill="none" stroke-width="1.300"><path d="M340 385.300h-1.500l-3 3v2.500l3 3h1.500" stroke="#0000ff"/><path d="M340 385.300h1l2.500 3v2.500l-2.500 3h-1" stroke="#000"/></g>
<text class="m" transform="translate(295.68,416) scale(1,1)" font-size="14.4" font-weight="bold" fill="#000" xml:space="preserve" letter-spacing="-0.641">f1</text>
<text class="m" transform="translate(335.68,416) scale(1,1)" font-size="14.4" font-weight="bold" fill="#000" xml:space="preserve" letter-spacing="-0.641">d2</text>
<text class="m" transform="translate(367.68,416) scale(1,1)" font-size="14.4" font-weight="bold" fill="#000" xml:space="preserve" letter-spacing="-0.641">d3</text>
<text class="m" transform="translate(407.68,416) scale(1,1)" font-size="14.4" font-weight="bold" fill="#000" xml:space="preserve" letter-spacing="-0.641">d4</text>
<text class="m" transform="translate(439.68,416) scale(1,1)" font-size="14.4" font-weight="bold" fill="#000" xml:space="preserve" letter-spacing="-0.641">d5</text>
<text class="m" transform="translate(479.68,416) scale(1,1)" font-size="14.4" font-weight="bold" fill="#000" xml:space="preserve" letter-spacing="-0.641">d6</text>
<text class="m" transform="translate(511.68,416) scale(1,1)" font-size="14.4" font-weight="bold" fill="#000" xml:space="preserve" letter-spacing="-0.641">d7</text>
<text class="m" transform="translate(551.68,416) scale(1,1)" font-size="14.4" font-weight="bold" fill="#000" xml:space="preserve" letter-spacing="-0.641">d8</text>
<text class="m" transform="translate(583.68,416) scale(1,1)" font-size="14.4" font-weight="bold" fill="#000" xml:space="preserve" letter-spacing="-0.641">d9</text>
</svg>
</body></html>
